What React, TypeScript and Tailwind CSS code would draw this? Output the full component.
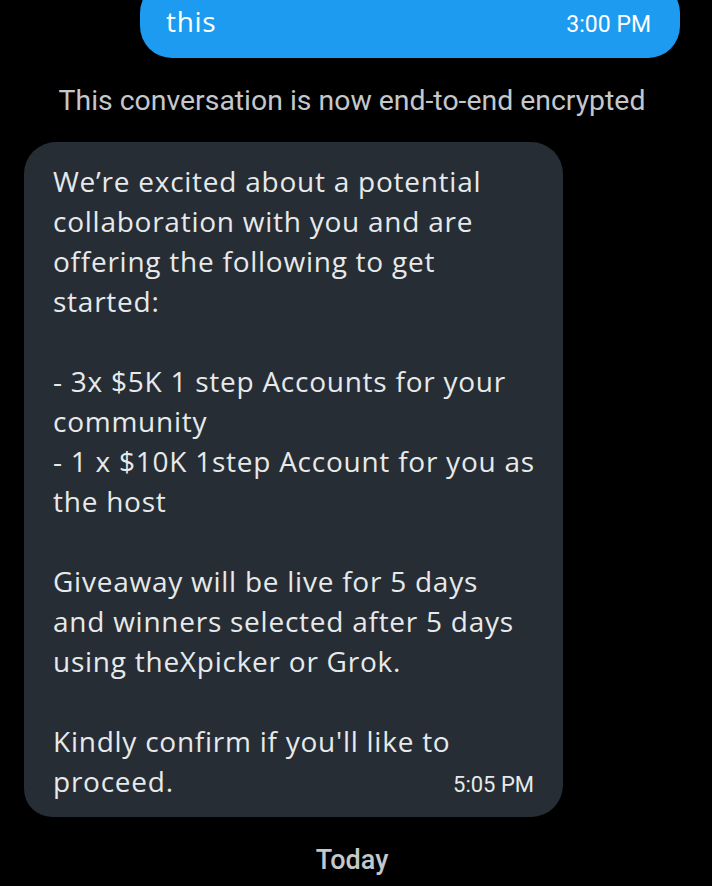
import React from "react";

const lines1 = [
  "We’re excited about a potential",
  "collaboration with you and are",
  "offering the following to get",
  "started:",
  "\u00a0",
  "- 3x $5K 1 step Accounts for your",
  "community",
  "- 1 x $10K 1step Account for you as",
  "the host",
  "\u00a0",
  "Giveaway will be live for 5 days",
  "and winners selected after 5 days",
  "using theXpicker or Grok.",
  "\u00a0",
  "Kindly confirm if you'll like to",
];

export default function App() {
  return (
    <div
      className="w-[712px] h-[886px] bg-black overflow-hidden flex flex-col"
      style={{ fontFamily: "Roboto, 'Noto Sans', sans-serif" }}
    >
      <div className="flex justify-end pr-[32px]">
        <div className="w-[540px] -mt-[19px] bg-[#1d9bf0] rounded-[32px] pl-[26px] pr-[29px] pt-[20px] pb-[17px] flex items-baseline justify-between text-white">
          <span className="text-[28px] leading-[40px] tracking-[0.7px] font-['Open_Sans',sans-serif]">this</span>
          <span className="text-[23px] leading-[24px]">3:00 PM</span>
        </div>
      </div>

      <div className="mt-[27px] pr-[8px] text-center text-[28.4px] leading-[32px] text-[#c4c8cb]">
        This conversation is now end-to-end encrypted
      </div>

      <div className="mt-[25px] pl-[24px]">
        <div className="w-[539px] bg-[#262d34] rounded-[32px] rounded-bl-[28px] pl-[29px] pr-[29px] pt-[19px] pb-[16px] text-[#e7e9ea] font-['Open_Sans',sans-serif]">
          {lines1.map((l, i) => (
            <div key={i} className="text-[28px] leading-[40px] tracking-[0.75px] whitespace-nowrap">
              {l}
            </div>
          ))}
          <div className="flex items-baseline justify-between h-[40px]">
            <span className="text-[28px] leading-[40px] tracking-[0.75px]">proceed.</span>
            <span className="text-[22px] leading-[24px] font-['Roboto',sans-serif]">5:05 PM</span>
          </div>
        </div>
      </div>

      <div className="mt-[27px] pr-[8px] text-center text-[27px] leading-[32px] font-medium text-[#c4c8cb]">
        Today
      </div>
    </div>
  );
}
